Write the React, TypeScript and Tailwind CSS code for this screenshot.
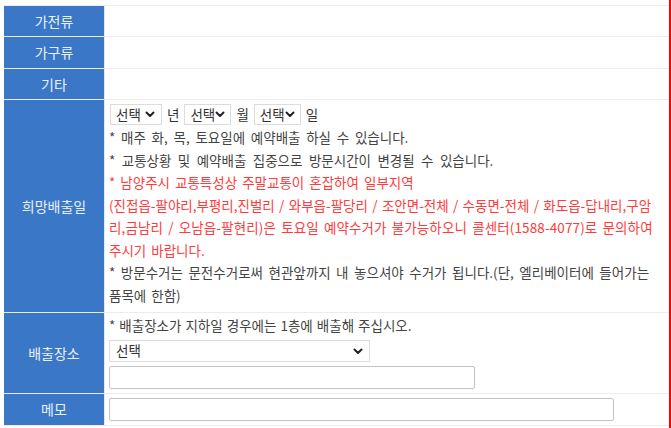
import type { ReactNode } from 'react'

const FONT = { fontFamily: '"Noto Sans CJK KR", "Malgun Gothic", "Noto Sans", sans-serif' }

function Chevron() {
  return (
    <svg width="10" height="7" viewBox="0 0 10 7" className="shrink-0">
      <path d="M1.5 1.5 5 5l3.5-3.5" fill="none" stroke="#222" strokeWidth="2" strokeLinecap="round" strokeLinejoin="round" />
    </svg>
  )
}

// fake native select: label + chevron, light border
function SelectBox({ className, chevronPad = 'pr-[5px]' }: { className: string; chevronPad?: string }) {
  return (
    <div className={`flex items-center justify-between bg-white border border-[#dcdcdc] pl-[5px] ${chevronPad} ${className}`}>
      <span className="text-[13.5px] leading-none text-[#333]">선택</span>
      <Chevron />
    </div>
  )
}

function Row({ label, h, children, contentClass = '' }: { label: string; h: string; children?: ReactNode; contentClass?: string }) {
  return (
    <div className={`flex ${h} border-b border-[#ececec]`}>
      <div className="w-[101px] shrink-0 bg-[#3b77c7] border-r border-[#e4e9f1] flex items-center justify-center text-[14px] text-[#e9f0fa]">
        {label}
      </div>
      <div className={`flex-1 pl-[4px] ${contentClass}`}>{children}</div>
    </div>
  )
}

export default function App() {
  return (
    <div className="w-[671px] h-[428px] bg-white border-r-2 border-[#ff0000] overflow-hidden" style={FONT}>
      <div className="pl-[4px] pt-[5px]">
        <div className="w-[665px] border-t border-[#ececec]">
          <Row label="가전류" h="h-[31px]" />
          <Row label="가구류" h="h-[32px]" />
          <Row label="기타" h="h-[31px]" />

          <Row label="희망배출일" h="h-[213px]" contentClass="pt-[4px] flex flex-col overflow-hidden">
            <div className="flex items-center h-[21px] pl-[1px] text-[13.5px] text-[#333]">
              <SelectBox className="w-[52px] h-[21px] pr-[6px]" />
              <span className="mx-[5px]">년</span>
              <SelectBox className="w-[47px] h-[21px] pr-[4px]" />
              <span className="mx-[5px]">월</span>
              <SelectBox className="w-[47px] h-[21px] pr-[4px]" />
              <span className="mx-[5px]">일</span>
            </div>
            <div className="mt-[1px] text-[13.5px] leading-[22.5px] [word-spacing:2px] whitespace-nowrap text-[#444]">
              <p className="[word-spacing:2.7px]">* 매주 화, 목, 토요일에 예약배출 하실 수 있습니다.</p>
              <p className="[word-spacing:3.4px]">* 교통상황 및 예약배출 집중으로 방문시간이 변경될 수 있습니다.</p>
              <div className="text-[#ff3b3b]">
                <p>* 남양주시 교통특성상 주말교통이 혼잡하여 일부지역</p>
                <p className="[word-spacing:1.3px]">(진접읍-팔야리,부평리,진벌리 / 와부읍-팔당리 / 조안면-전체 / 수동면-전체 / 화도읍-답내리,구암</p>
                <p className="tracking-[0.12px]">리,금남리 / 오남읍-팔현리)은 토요일 예약수거가 불가능하오니 콜센터(1588-4077)로 문의하여</p>
                <p>주시기 바랍니다.</p>
              </div>
              <p className="[word-spacing:2.5px]">* 방문수거는 문전수거로써 현관앞까지 내 놓으셔야 수거가 됩니다.(단, 엘리베이터에 들어가는</p>
              <p>품목에 한함)</p>
            </div>
          </Row>

          <Row label="배출장소" h="h-[81px]" contentClass="pt-[1px] flex flex-col">
            <p className="text-[13.5px] leading-[22px] [word-spacing:1px] text-[#444] whitespace-nowrap">
              * 배출장소가 지하일 경우에는 1층에 배출해 주십시오.
            </p>
            <SelectBox className="mt-[4px] w-[261px] h-[22px] pl-[6px]" chevronPad="pr-[6px]" />
            <input
              className="mt-[4px] w-[366px] h-[23px] border border-[#c4c4c4] rounded-[2px] bg-white outline-none"
              aria-label="상세주소"
            />
          </Row>

          <Row label="메모" h="h-[32px]" contentClass="flex items-center">
            <input
              className="w-[505px] h-[23px] border border-[#c4c4c4] rounded-[2px] bg-white outline-none"
              aria-label="메모"
            />
          </Row>
        </div>
      </div>
    </div>
  )
}
